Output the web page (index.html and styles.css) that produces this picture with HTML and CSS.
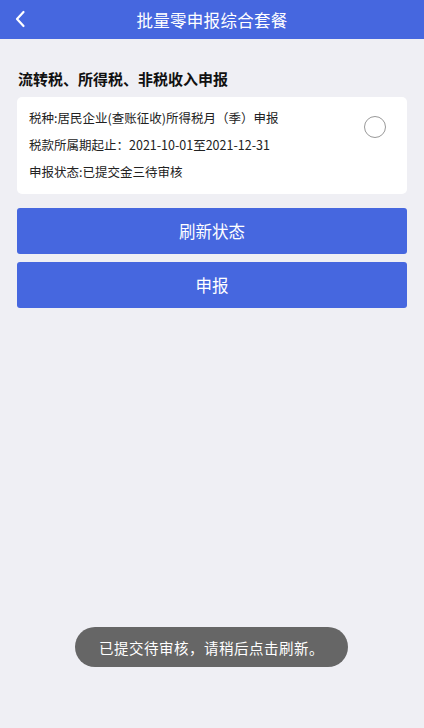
FILE: index.html
```html
<!DOCTYPE html>
<html lang="zh">
<head>
<meta charset="utf-8">
<link rel="stylesheet" href="styles.css">
</head>
<body>
<div class="page">
  <header class="nav">
    <span class="back">
      <svg width="12" height="18" viewBox="0 0 12 18"><path d="M9.5 2 L3 9 L9.5 16" fill="none" stroke="#fff" stroke-width="2.2" stroke-linecap="round" stroke-linejoin="round"/></svg>
    </span>
    <h1 class="title">批量零申报综合套餐</h1>
  </header>
  <main class="content">
    <h2 class="section-title">流转税、所得税、非税收入申报</h2>
    <div class="card">
      <div class="card-lines">
        <p class="line">税种:居民企业(查账征收)所得税月（季）申报</p>
        <p class="line">税款所属期起止：2021-10-01至2021-12-31</p>
        <p class="line">申报状态:已提交金三待审核</p>
      </div>
      <span class="radio"></span>
    </div>
    <button class="btn">刷新状态</button>
    <button class="btn">申报</button>
  </main>
  <div class="toast">已提交待审核，请稍后点击刷新。</div>
</div>
</body>
</html>
```

FILE: styles.css
```css
* { box-sizing: border-box; }
html, body { margin: 0; padding: 0; }
body {
  background: #efeff4;
  font-family: "Noto Sans CJK SC", "Noto Sans", Roboto, sans-serif;
  width: 424px;
  height: 728px;
  overflow: hidden;
}
.page { position: relative; height: 728px; }
.nav {
  height: 39px;
  background: #4667df;
  display: flex;
  align-items: center;
  justify-content: center;
  position: relative;
}
.back {
  position: absolute;
  left: 14px;
  top: 10px;
  display: flex;
}
.title {
  margin: 0;
  color: #fff;
  font-size: 16.5px;
  font-weight: 400;
  letter-spacing: 0.3px;
}
.content { padding: 28px 17px 0; }
.section-title {
  margin: 0 0 6px 1px;
  font-size: 15px;
  font-weight: 700;
  color: #111;
  line-height: 24px;
}
.card {
  background: #fff;
  border-radius: 5px;
  height: 97px;
  padding: 7px 12px 0 12px;
  display: flex;
  justify-content: space-between;
}
.line {
  margin: 0;
  font-size: 12.5px;
  line-height: 27px;
  color: #222;
}
.radio {
  width: 22px;
  height: 22px;
  border: 1px solid #999;
  border-radius: 50%;
  margin: 12px 9px 0 0;
}
.btn {
  display: block;
  width: 100%;
  height: 46px;
  border: none;
  border-radius: 3px;
  background: #4667df;
  color: #fff;
  font-family: inherit;
  font-size: 16.5px;
  margin-top: 14px;
}
.btn + .btn { margin-top: 8px; }
.toast {
  position: absolute;
  left: 75px;
  top: 627px;
  width: 273px;
  height: 40px;
  border-radius: 20px;
  background: #666;
  color: #fff;
  font-size: 14.5px;
  display: flex;
  align-items: center;
  justify-content: center;
  letter-spacing: 0.5px;
}
```
